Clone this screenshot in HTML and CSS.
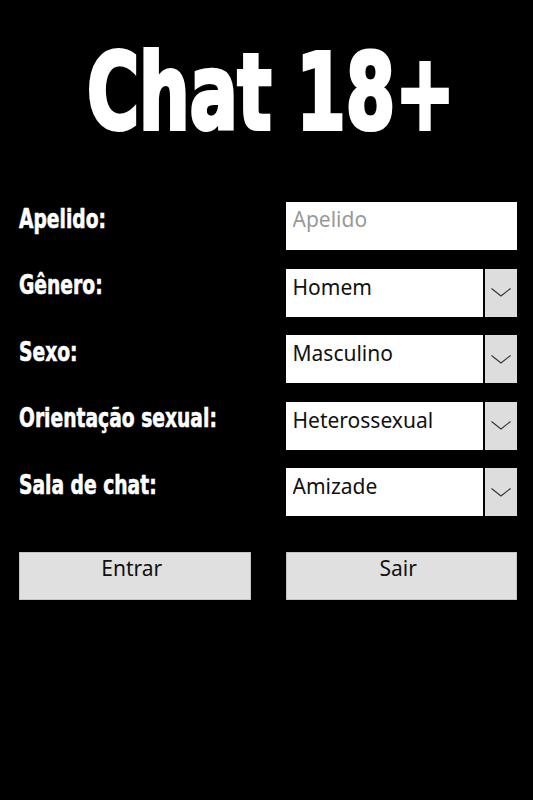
FILE: index.html
```html
<!DOCTYPE html>
<html lang="pt">
<head>
    <meta charset="UTF-8">
    <meta name="viewport" content="width=device-width, initial-scale=1.0">
    <title>Chat 18+</title>
    <link rel="stylesheet" href="styles.css">
</head>
<body>
    <h1 class="title"><span>Chat 18+</span></h1>
    <form id="loginForm" class="form">
        <div class="row">
            <label for="apelido"><span>Apelido:</span></label>
            <input type="text" id="apelido" name="apelido" placeholder="Apelido">
        </div>
        <div class="row">
            <label for="genero"><span>Gênero:</span></label>
            <div class="select">
                <select id="genero" name="genero">
                    <option>Homem</option>
                    <option>Mulher</option>
                </select>
                <span class="arrow"><svg width="20" height="9" viewBox="0 0 20 9"><path d="M0.5 0.5 L10 8 L19.5 0.5" fill="none" stroke="#333" stroke-width="1.1"/></svg></span>
            </div>
        </div>
        <div class="row">
            <label for="sexo"><span>Sexo:</span></label>
            <div class="select">
                <select id="sexo" name="sexo">
                    <option>Masculino</option>
                    <option>Feminino</option>
                </select>
                <span class="arrow"><svg width="20" height="9" viewBox="0 0 20 9"><path d="M0.5 0.5 L10 8 L19.5 0.5" fill="none" stroke="#333" stroke-width="1.1"/></svg></span>
            </div>
        </div>
        <div class="row">
            <label for="orientacao"><span>Orientação sexual:</span></label>
            <div class="select">
                <select id="orientacao" name="orientacao">
                    <option>Heterossexual</option>
                    <option>Homossexual</option>
                    <option>Bissexual</option>
                </select>
                <span class="arrow"><svg width="20" height="9" viewBox="0 0 20 9"><path d="M0.5 0.5 L10 8 L19.5 0.5" fill="none" stroke="#333" stroke-width="1.1"/></svg></span>
            </div>
        </div>
        <div class="row">
            <label for="sala"><span>Sala de chat:</span></label>
            <div class="select">
                <select id="sala" name="sala">
                    <option>Amizade</option>
                    <option>Namoro</option>
                </select>
                <span class="arrow"><svg width="20" height="9" viewBox="0 0 20 9"><path d="M0.5 0.5 L10 8 L19.5 0.5" fill="none" stroke="#333" stroke-width="1.1"/></svg></span>
            </div>
        </div>
        <div class="buttons">
            <button type="submit">Entrar</button>
            <button type="button" id="sair">Sair</button>
        </div>
    </form>
</body>
</html>
```

FILE: styles.css
```css
body {
    margin: 0;
    background-color: #000;
    color: #fff;
    font-family: "Noto Sans", Arial, sans-serif;
}

.title {
    margin: 0;
    padding: 40px 0 0 9px;
    height: 168px;
    box-sizing: border-box;
    text-align: center;
    font-family: "DejaVu Sans Condensed", "DejaVu Sans", sans-serif;
    font-stretch: condensed;
    font-weight: bold;
    font-size: 106px;
    line-height: 106px;
    -webkit-text-stroke: 4px #fff;
}

.title span {
    display: inline-block;
    transform: scaleX(0.745);
}

.form {
    padding: 34px 16px 0 19px;
}

.row,
.buttons {
    display: grid;
    grid-template-columns: minmax(0, 1fr) minmax(0, 1fr);
    column-gap: 35px;
    margin-bottom: 18.5px;
}

.row label {
    font-family: "DejaVu Sans Condensed", "DejaVu Sans", sans-serif;
    font-stretch: condensed;
    font-weight: bold;
    font-size: 27px;
    line-height: 30px;
    padding-top: 1.5px;
    white-space: nowrap;
    -webkit-text-stroke: 0.6px #fff;
}

.row label span {
    display: inline-block;
    transform-origin: left top;
    transform: scaleX(0.77);
}

input[type="text"],
select {
    height: 48px;
    margin: 0;
    padding: 4px 7px 18px;
    border: none;
    border-radius: 0;
    background-color: #fff;
    color: #111;
    font-family: "Noto Sans", Arial, sans-serif;
    font-size: 21px;
    box-sizing: border-box;
    outline: none;
}

input[type="text"] {
    width: 100%;
}

input::placeholder {
    color: #999;
}

.select {
    display: flex;
    height: 48px;
    gap: 2px;
}

select {
    flex: 1;
    min-width: 0;
    appearance: none;
    -webkit-appearance: none;
}

.arrow {
    width: 32px;
    background-color: #ddd;
    display: flex;
    justify-content: center;
    align-items: center;
}

.buttons {
    margin-top: 35.5px;
}

button {
    height: 48px;
    padding: 0 6px 16px 0;
    background-color: #e0e0e0;
    color: #111;
    border: 1px solid #c4c4c4;
    border-radius: 0;
    font-family: "Noto Sans", Arial, sans-serif;
    font-size: 21px;
    cursor: pointer;
}

button:hover {
    background-color: #d4d4d4;
}
```
